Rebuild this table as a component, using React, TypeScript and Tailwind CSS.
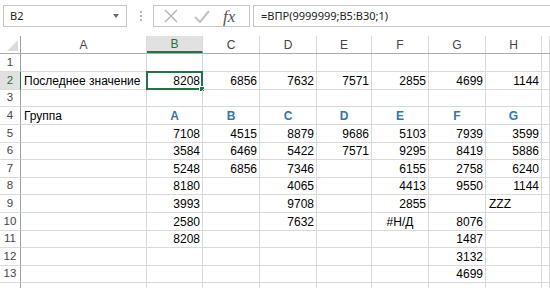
import React from 'react';

// column letters and widths of the sheet grid (row header first)
const cols = ['A', 'B', 'C', 'D', 'E', 'F', 'G', 'H', 'I'];
const colW = ['w-[126px]', 'w-[56px]', 'w-[57px]', 'w-[57px]', 'w-[55px]', 'w-[57px]', 'w-[57px]', 'w-[56px]', 'flex-1'];
const rowH = ['h-[18px]', 'h-[18px]', 'h-[17px]', 'h-[18px]', 'h-[18px]', 'h-[17px]', 'h-[18px]', 'h-[17px]', 'h-[18px]', 'h-[18px]', 'h-[17px]', 'h-[18px]', 'h-[17px]', 'h-[18px]'];

const data: string[][] = [
  [],
  ['Последнее значение', '8208', '6856', '7632', '7571', '2855', '4699', '1144'],
  [],
  ['Группа', 'A', 'B', 'C', 'D', 'E', 'F', 'G'],
  ['', '7108', '4515', '8879', '9686', '5103', '7939', '3599'],
  ['', '3584', '6469', '5422', '7571', '9295', '8419', '5886'],
  ['', '5248', '6856', '7346', '', '6155', '2758', '6240'],
  ['', '8180', '', '4065', '', '4413', '9550', '1144'],
  ['', '3993', '', '9708', '', '2855', '', 'ZZZ'],
  ['', '2580', '', '7632', '', '#Н/Д', '8076', ''],
  ['', '8208', '', '', '', '', '1487', ''],
  ['', '', '', '', '', '', '3132', ''],
  ['', '', '', '', '', '', '4699', ''],
  [],
];

const cellCls = (v: string, r: number, c: number) => {
  if (r === 3 && c > 0) return 'justify-center font-bold text-[#2e75b6]';
  if (/^\d+$/.test(v)) return 'justify-end pr-[2px]';
  if (v.startsWith('#')) return 'justify-center';
  return 'justify-start pl-[3px]';
};

const TopBar = () => (
  <div className="flex h-[36px] items-start pt-[5px] pl-[3px] font-['Noto_Sans',sans-serif] text-[11px] text-[#222]">
    <div className="flex h-[22px] w-[124px] items-center justify-between border border-[#c6c6c6] pl-[6px] pr-[7px]">
      <span>B2</span>
      <span className="h-0 w-0 border-x-[3.5px] border-t-[4px] border-x-transparent border-t-[#6a6a6a]" />
    </div>
    <div className="ml-[13px] flex h-[22px] w-[2px] flex-col items-center justify-center gap-[2px]">
      <span className="h-[2px] w-[2px] bg-[#b4b4b4]" />
      <span className="h-[2px] w-[2px] bg-[#b4b4b4]" />
      <span className="h-[2px] w-[2px] bg-[#b4b4b4]" />
    </div>
    <div className="ml-[11px] flex h-[22px] w-[97px] items-center border border-[#c6c6c6]">
      <svg width="14" height="14" viewBox="0 0 14 14" className="ml-[10px]">
        <path d="M1 1 L13 13 M13 1 L1 13" stroke="#b5b5b5" strokeWidth="1.4" fill="none" />
      </svg>
      <svg width="16" height="13" viewBox="0 0 16 13" className="ml-[16px]">
        <path d="M1 7 L6 12 L15 1" stroke="#c2c2c2" strokeWidth="2" fill="none" />
      </svg>
      <span className="ml-[13px] font-['Liberation_Serif',serif] text-[17px] italic leading-none text-[#555]">fx</span>
    </div>
    <div className="ml-[3px] flex h-[22px] flex-1 items-center border border-r-0 border-[#c6c6c6] pl-[7px]">
      =ВПР(9999999;B5:B30;1)
    </div>
  </div>
);

const App: React.FC = () => {
  return (
    <div className="h-[288px] w-[550px] overflow-hidden bg-white font-['Liberation_Sans',sans-serif] text-[12px] text-black">
      <TopBar />

      {/* заголовки столбцов */}
      <div className="flex h-[18px] border-b border-[#ababab] text-[#444]">
        <div className="relative w-[21px] border-r border-[#9e9e9e]">
          <span className="absolute bottom-[2px] right-[2px] h-0 w-0 border-b-[11px] border-l-[11px] border-b-[#dcdcdc] border-l-transparent" />
        </div>
        {cols.map((c, i) => (
          <div
            key={c}
            className={`${colW[i]} flex items-center justify-center border-r border-[#dadada] ${
              c === 'B' ? 'border-b-2 border-b-[#217346] bg-[#e1e1e1] text-[#217346]' : ''
            }`}
          >
            {c === 'I' ? '' : c}
          </div>
        ))}
      </div>

      {/* строки листа */}
      {rowH.map((h, r) => (
        <div key={r} className={`flex ${h}`}>
          <div
            className={`flex w-[21px] items-center justify-center border-b border-r text-[11.5px] ${
              r === 1
                ? 'border-b-[#dadada] border-r-[#217346] bg-[#e1e1e1] text-[#217346]'
                : 'border-b-[#dadada] border-r-[#9e9e9e] text-[#444]'
            }`}
          >
            {r < 13 ? r + 1 : ''}
          </div>
          {cols.map((c, i) => {
            const v = data[r]?.[i] ?? '';
            const sel = r === 1 && c === 'B';
            return (
              <div
                key={c}
                className={`${colW[i]} relative flex items-center whitespace-nowrap border-b border-r border-[#d9d9d9] ${cellCls(v, r, i)}`}
              >
                {v}
                {sel && (
                  <span className="absolute -left-[1px] -top-[1px] bottom-[-1px] right-[-1px] border-2 border-[#217346]">
                    <span className="absolute -bottom-[4px] -right-[4px] h-[6px] w-[6px] border border-white bg-[#217346]" />
                  </span>
                )}
              </div>
            );
          })}
        </div>
      ))}
    </div>
  );
};

export default App;
